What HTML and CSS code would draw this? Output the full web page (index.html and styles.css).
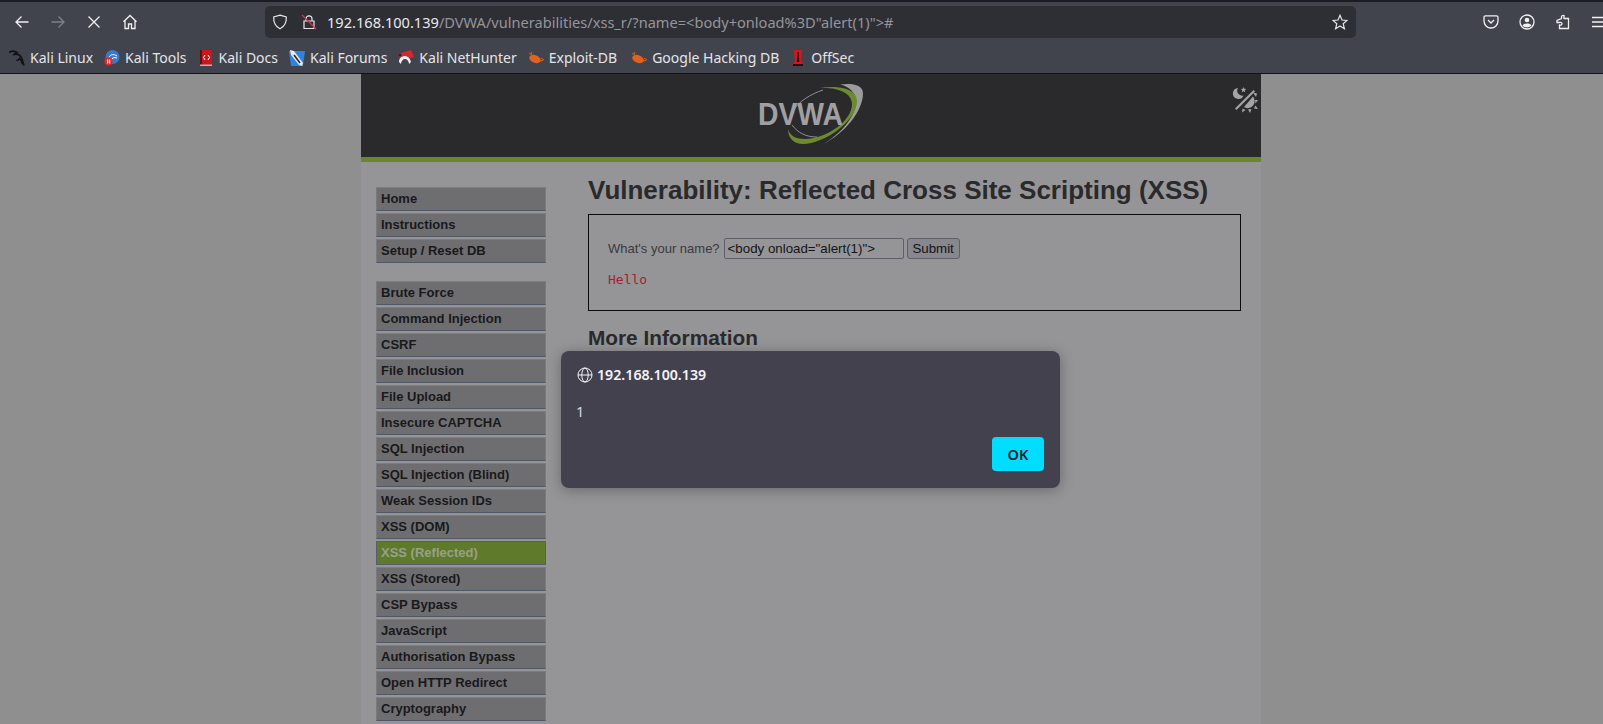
FILE: index.html
```html
<!DOCTYPE html>
<html lang="en">
<head>
  <meta charset="UTF-8">
  <title>Vulnerability: Reflected Cross Site Scripting (XSS)</title>
  <link rel="stylesheet" href="styles.css">
</head>
<body>
  <div class="chrome">
    <div class="toolbar">
      <div class="nav-buttons">
        <svg class="tb-icon" viewBox="0 0 16 16"><path d="M14.5 8H2M7.5 2.5 2 8l5.5 5.5"/></svg>
        <svg class="tb-icon dim" viewBox="0 0 16 16"><path d="M1.5 8H14M8.5 2.5 14 8l-5.5 5.5"/></svg>
        <svg class="tb-icon" viewBox="0 0 16 16"><path d="M2.5 2.5l11 11M13.5 2.5l-11 11"/></svg>
        <svg class="tb-icon" viewBox="0 0 16 16"><path d="M1.5 7.8 8 1.5l6.500 6.300M3 6.500v8h3.500v-4.500h3v4.500H13v-8"/></svg>
      </div>
      <div class="urlbar">
        <svg class="url-icon" viewBox="0 0 16 16"><path d="M8 1.200 14.300 3c.3 5.500-1.700 9.500-6.300 11.800C3.400 12.500 1.400 8.500 1.700 3z"/></svg>
        <svg class="url-icon lock" viewBox="0 0 16 16"><path d="M5 7V4.800a3 3 0 0 1 6 0V7M3 7h10v7.500H3z"/><path class="strike" d="M1 1l14 14"/></svg>
        <span class="url-text"><span class="url-host">192.168.100.139</span>/DVWA/vulnerabilities/xss_r/?name=&lt;body+onload%3D"alert(1)"&gt;#</span>
        <svg class="url-icon star" viewBox="0 0 16 16"><path d="M8 1.300 10 6l5 .4-3.800 3.300 1.200 5L8 12l-4.400 2.700 1.200-5L1 6.400 6 6z"/></svg>
      </div>
      <div class="tool-buttons">
        <svg class="tb-icon" viewBox="0 0 16 16"><path d="M2.500 1.800h11a1.500 1.500 0 0 1 1.500 1.500v3.700a7 7 0 0 1-14 0V3.300a1.500 1.500 0 0 1 1.500-1.500zM5 6l3 3 3-3"/></svg>
        <svg class="tb-icon" viewBox="0 0 16 16"><circle cx="8" cy="8" r="7"/><circle class="fill" cx="8" cy="6" r="2.300"/><path class="fill" d="M3.500 11.500c1-1.500 2.500-2 4.500-2s3.500.5 4.500 2c-1 1.200-2.700 1.800-4.500 1.800s-3.500-.6-4.500-1.800z"/></svg>
        <svg class="tb-icon" viewBox="0 0 16 16"><path d="M9 1.500v3h4.500v10H4.500v-3.500c2 .5 2.500-.7 2.500-1.500S6 8 4.500 8.500H2L2 6.500l4.500-2V3C6.500 2 7.500 1 9 1.500z"/></svg>
        <svg class="tb-icon" viewBox="0 0 16 16"><path d="M1 3.500h14M1 8h14M1 12.500h14"/></svg>
      </div>
    </div>
    <div class="bookmarks">
      <a class="bookmark">
        <svg class="fav" viewBox="0 0 16 16"><path class="fav-dragon" d="M0 2.500C3 .5 6 1 8 2.500 6.500 3 5.500 3.500 5 4.500c3-1 6 .5 7.500 3 1 2 1.500 4 1 6.500-.5-3-1.500-4.500-3-5.500-.5 1.500-2 2-3 1.500M14 12l1 3.500"/></svg>
        Kali Linux
      </a>
      <a class="bookmark">
        <svg class="fav" viewBox="0 0 16 16"><circle cx="8.500" cy="7" r="7" fill="#3b78c8"/><path d="M5 7c2-3 5-3 8-1M7 10c1-2 3-3 6-2" stroke="#fff" fill="none"/><circle cx="4.500" cy="11.500" r="4" fill="#e0282e"/><rect x="3" y="9.500" width="1.200" height="4" fill="#fff"/><rect x="5" y="9.500" width="1.200" height="4" fill="#fff"/></svg>
        Kali Tools
      </a>
      <a class="bookmark">
        <svg class="fav" viewBox="0 0 16 16"><rect x="2" y="0" width="12" height="15" fill="#c8161d"/><rect x="2" y="0" width="2" height="15" fill="#5b1016"/><rect x="2" y="14.500" width="12" height="1.500" fill="#cfa7a7"/><path d="M7 5 5.500 7.500 7 10M10 5l1.500 2.500L10 10" stroke="#fff" fill="none"/></svg>
        Kali Docs
      </a>
      <a class="bookmark">
        <svg class="fav" viewBox="0 0 16 16"><path d="M0 1h16l-2 15H2z" fill="#2c83e0"/><path d="M1 0l4 1 9 12-1 3-3-1L2 5z" fill="#e9eaee"/><path d="M5 5l6 8" stroke="#222" stroke-width="1.500"/></svg>
        Kali Forums
      </a>
      <a class="bookmark">
        <svg class="fav" viewBox="0 0 16 16"><path d="M0 4 13 0l3 7-4 1-3-2-4 2-2 4z" fill="#d8262c"/><path d="M1 12c0-4 3-6 6-6s5 2 6 6l-2 2c0-3-2-5-4-5s-4 2-4 5z" fill="#f0f0f2"/><circle cx="2" cy="5" r="1.500" fill="#222"/></svg>
        Kali NetHunter
      </a>
      <a class="bookmark wide">
        <svg class="fav" viewBox="0 0 16 16"><ellipse cx="7" cy="9" rx="6" ry="3.800" fill="#e2621b" transform="rotate(20 7 9)"/><path d="M1 3l4 3M13 8l3 2M12 11l3-.5M3 4l1-2" stroke="#e2621b"/></svg>
        Exploit-DB
      </a>
      <a class="bookmark">
        <svg class="fav" viewBox="0 0 16 16"><ellipse cx="7" cy="9" rx="6" ry="3.800" fill="#e2621b" transform="rotate(20 7 9)"/><path d="M1 3l4 3M13 8l3 2M12 11l3-.5M3 4l1-2" stroke="#e2621b"/></svg>
        Google Hacking DB
      </a>
      <a class="bookmark">
        <svg class="fav" viewBox="0 0 16 16"><path d="M4 0h8l-1 11 3 4H2l3-4z" fill="#d9141c"/><path d="M7.300 2h1.400l.5 10H6.800z" fill="#2a0a0c"/><rect x="3" y="14" width="10" height="2" fill="#2a0a0c"/></svg>
        OffSec
      </a>
    </div>
  </div>

  <div class="page">
    <div class="container">
      <header class="site-header">
        <svg class="logo" viewBox="0 0 110 64">
          <path class="sw-grey" d="M84 2.500c12-1.500 23 0 23 9 0 17-18 40-40 50.500 17-9 33-28 33-42 0-9-6-15-16-17.500z"/>
          <path class="sw-green" d="M64 6c17-3 37 0 37 13 0 20-33 43-54 43-9 0-15-6-15-15 2 7 8 10 17 10 20 0 47-17 47-35 0-11-14-17-32-16z"/>
          <path class="sw-thin" d="M67 8C55 12 43 19 37 29M36 43c6 8 14 12 25 12"/>
          <text class="logo-text" x="2" y="43" textLength="85" lengthAdjust="spacingAndGlyphs">DVWA</text>
        </svg>
        <svg class="theme-toggle" viewBox="0 0 26 26">
          <path d="M3 21.500 21.500 3l1.500 1.500L4.500 23z"/>
          <path d="M6 1a5.500 5.500 0 1 0 5.500 7.500A5 5 0 0 1 6 1z"/>
          <path d="M11.500 0l.8 1.800 1.900.2-1.400 1.300.4 1.900-1.700-1-1.700 1 .4-1.900L9 2l1.900-.2z"/>
          <path d="M21 9.500c2.500 3.500 2 8-1.500 10.500-2.500 1.500-5.500 1.500-7.500 0z"/>
          <path d="M21 5.500l4 1-1 3.500zM26 13l-2.500 3.500-.5-3.500zM26 22l-4-.5 1.500-3zM18 26l-2-3.500 3.500-.5zM10 25.500l.5-4 3 1.500z"/>
        </svg>
      </header>
      <div class="green-bar"></div>
      <div class="columns">
        <nav class="side-menu">
          <ul class="menu-group">
            <li class="menu-item">Home</li>
            <li class="menu-item">Instructions</li>
            <li class="menu-item">Setup / Reset DB</li>
          </ul>
          <ul class="menu-group">
            <li class="menu-item">Brute Force</li>
            <li class="menu-item">Command Injection</li>
            <li class="menu-item">CSRF</li>
            <li class="menu-item">File Inclusion</li>
            <li class="menu-item">File Upload</li>
            <li class="menu-item">Insecure CAPTCHA</li>
            <li class="menu-item">SQL Injection</li>
            <li class="menu-item">SQL Injection (Blind)</li>
            <li class="menu-item">Weak Session IDs</li>
            <li class="menu-item">XSS (DOM)</li>
            <li class="menu-item selected">XSS (Reflected)</li>
            <li class="menu-item">XSS (Stored)</li>
            <li class="menu-item">CSP Bypass</li>
            <li class="menu-item">JavaScript</li>
            <li class="menu-item">Authorisation Bypass</li>
            <li class="menu-item">Open HTTP Redirect</li>
            <li class="menu-item">Cryptography</li>
          </ul>
        </nav>
        <main class="content">
          <h1>Vulnerability: Reflected Cross Site Scripting (XSS)</h1>
          <div class="vulnerable-code">
            <form class="name-form">
              <label class="name-label">What's your name?</label>
              <input class="name-input" type="text" value='&lt;body onload="alert(1)"&gt;'>
              <button class="submit-btn" type="button">Submit</button>
            </form>
            <pre class="hello">Hello</pre>
          </div>
          <h2>More Information</h2>
        </main>
      </div>
    </div>
  </div>

  <div class="alert-dialog">
    <div class="alert-title">
      <svg class="globe" viewBox="0 0 16 16"><circle cx="8" cy="8" r="7"/><ellipse cx="8" cy="8" rx="3.200" ry="7"/><path d="M1 8h14"/></svg>
      192.168.100.139
    </div>
    <div class="alert-message">1</div>
    <div class="alert-actions">
      <button class="ok-btn" type="button">OK</button>
    </div>
  </div>
</body>
</html>
```

FILE: styles.css
```css
html, body {
  margin: 0;
  height: 724px;
  overflow: hidden;
}

body {
  font-family: "Liberation Sans", Arial, sans-serif;
  background-color: #8f8f90;
}

/* browser chrome */
.chrome {
  height: 74px;
  box-sizing: border-box;
  background-color: #42444d;
  border-top: 2px solid #1c1d22;
  border-bottom: 1px solid #111216;
  font-family: "Noto Sans", "Open Sans", sans-serif;
  color: #e4e4e8;
}

.toolbar {
  height: 40px;
  display: flex;
  align-items: center;
}

.nav-buttons {
  width: 265px;
  box-sizing: border-box;
  padding-left: 14px;
  display: flex;
  gap: 20px;
  flex-shrink: 0;
}

.tb-icon {
  width: 16px;
  height: 16px;
  fill: none;
  stroke: #f0f0f3;
  stroke-width: 1.3;
  flex-shrink: 0;
}

.tb-icon.dim {
  stroke: #7f8087;
}

.tb-icon .fill {
  fill: #f0f0f3;
  stroke: none;
}

.urlbar {
  width: 1091px;
  height: 32px;
  box-sizing: border-box;
  background-color: #2e2f35;
  border-radius: 5px;
  display: flex;
  align-items: center;
  padding-left: 7px;
  flex-shrink: 0;
}

.url-icon {
  width: 16px;
  height: 16px;
  fill: none;
  stroke: #e6e6ea;
  stroke-width: 1.2;
  flex-shrink: 0;
}

.url-icon.lock {
  margin-left: 13px;
}

.url-icon .strike {
  stroke: #e0304a;
}

.url-icon.star {
  margin-left: auto;
  margin-right: 8px;
}

.url-text {
  margin-left: 10px;
  font-size: 14.6px;
  color: #94959b;
  white-space: nowrap;
}

.url-host {
  color: #e9e9ec;
}

.tool-buttons {
  flex: 1;
  display: flex;
  gap: 20px;
  padding-left: 127px;
}

.bookmarks {
  height: 31px;
  display: flex;
  align-items: center;
  padding-left: 9px;
  font-size: 14px;
  margin-top: -7px;
  padding-top: 7px;
}

.bookmark {
  display: flex;
  align-items: center;
  gap: 5px;
  white-space: nowrap;
  margin-right: 11px;
}

.bookmark.wide {
  margin-right: 14px;
}

.fav {
  width: 16px;
  height: 16px;
  flex-shrink: 0;
}

.fav-dragon {
  fill: none;
  stroke: #111115;
  stroke-width: 1.6;
}

/* dimmed page */
.page {
  height: 650px;
  overflow: hidden;
}

.container {
  width: 900px;
  height: 100%;
  margin-left: 361px;
  background-color: #959597;
}

.site-header {
  height: 83px;
  box-sizing: border-box;
  padding-top: 8px;
  background-color: #2a2a2c;
  display: flex;
  justify-content: center;
  position: relative;
}

.logo {
  width: 110px;
  height: 64px;
  margin-left: -1px;
}

.logo-text {
  font-family: "Liberation Sans", Arial, sans-serif;
  font-size: 32px;
  font-weight: bold;
  fill: #a0a0a3;
}

.sw-grey {
  fill: #9c9c9e;
}

.sw-green {
  fill: #6d8a2e;
}

.sw-thin {
  fill: none;
  stroke: #8e8e90;
  stroke-width: 1;
}

.theme-toggle {
  position: absolute;
  top: 13px;
  right: 3px;
  width: 26px;
  height: 26px;
  fill: #a4a4a6;
}

.green-bar {
  height: 5px;
  background-color: #6b862c;
}

.columns {
  display: flex;
}

.side-menu {
  width: 170px;
  margin-left: 15px;
  padding-top: 25px;
  flex-shrink: 0;
}

.menu-group {
  list-style: none;
  margin: 0 0 18px;
  padding: 0;
}

.menu-item {
  height: 24px;
  box-sizing: border-box;
  margin-bottom: 2px;
  padding-left: 4px;
  background-color: #6e6e70;
  border-top: 1px solid #7d7d7f;
  border-bottom: 1px solid #525766;
  border-left: 1px solid #7a7a7c;
  border-right: 1px solid #7a7a7c;
  font-size: 13px;
  font-weight: bold;
  line-height: 22px;
  color: #19191b;
}

.menu-item.selected {
  background-color: #5f7a2a;
  border-color: #525f6e;
  color: #97a08c;
}

.content {
  width: 653px;
  margin-left: 42px;
}

h1 {
  margin: 13px 0 0;
  font-size: 26px;
  line-height: 30px;
  color: #2a2a2c;
}

.vulnerable-code {
  height: 97px;
  box-sizing: border-box;
  margin-top: 9px;
  padding: 23px 19px 0;
  border: 1px solid #0c0c0e;
}

.name-form {
  display: flex;
  align-items: center;
  gap: 3px;
  font-size: 13px;
  color: #3a3a3c;
}

.name-input {
  width: 180px;
  height: 21px;
  box-sizing: border-box;
  margin-left: 1px;
  padding: 0 3px;
  background-color: #959597;
  border: 1px solid #5f5f68;
  border-radius: 2px;
  font-family: "Liberation Sans", Arial, sans-serif;
  font-size: 13.3px;
  color: #141416;
}

.submit-btn {
  width: 53px;
  height: 21px;
  padding: 0;
  background-color: #87878e;
  border: 1px solid #5f5f68;
  border-radius: 3px;
  font-family: "Liberation Sans", Arial, sans-serif;
  font-size: 13.3px;
  color: #141416;
}

.hello {
  margin: 13px 0 0;
  font-family: "DejaVu Sans Mono", monospace;
  font-size: 13px;
  color: #a5202a;
}

h2 {
  margin: 15px 0 0;
  font-size: 20.8px;
  line-height: 24px;
  color: #2a2a2c;
}

/* alert over the page */
.alert-dialog {
  position: absolute;
  left: 561px;
  top: 351px;
  width: 499px;
  height: 137px;
  box-sizing: border-box;
  padding: 13px 16px 16px;
  background-color: #44414f;
  border-radius: 8px;
  box-shadow: 0 2px 14px rgba(0, 0, 0, 0.3);
  font-family: "Noto Sans", "Open Sans", sans-serif;
  color: #f4f4f6;
}

.alert-title {
  display: flex;
  align-items: center;
  gap: 4px;
  font-size: 14.2px;
  font-weight: 600;
  line-height: 22px;
}

.globe {
  width: 16px;
  height: 16px;
  fill: none;
  stroke: #f4f4f6;
  stroke-width: 1;
}

.alert-message {
  margin-top: 15px;
  font-size: 14.5px;
  line-height: 20px;
  margin-left: -1px;
  color: #d8d8dc;
}

.alert-actions {
  display: flex;
  justify-content: flex-end;
  margin-top: 16px;
}

.ok-btn {
  width: 52px;
  height: 34px;
  padding: 0;
  background-color: #00ddff;
  border: none;
  border-radius: 4px;
  font-family: "Noto Sans", "Open Sans", sans-serif;
  font-size: 14.5px;
  font-weight: 600;
  color: #1c1b22;
}
```
